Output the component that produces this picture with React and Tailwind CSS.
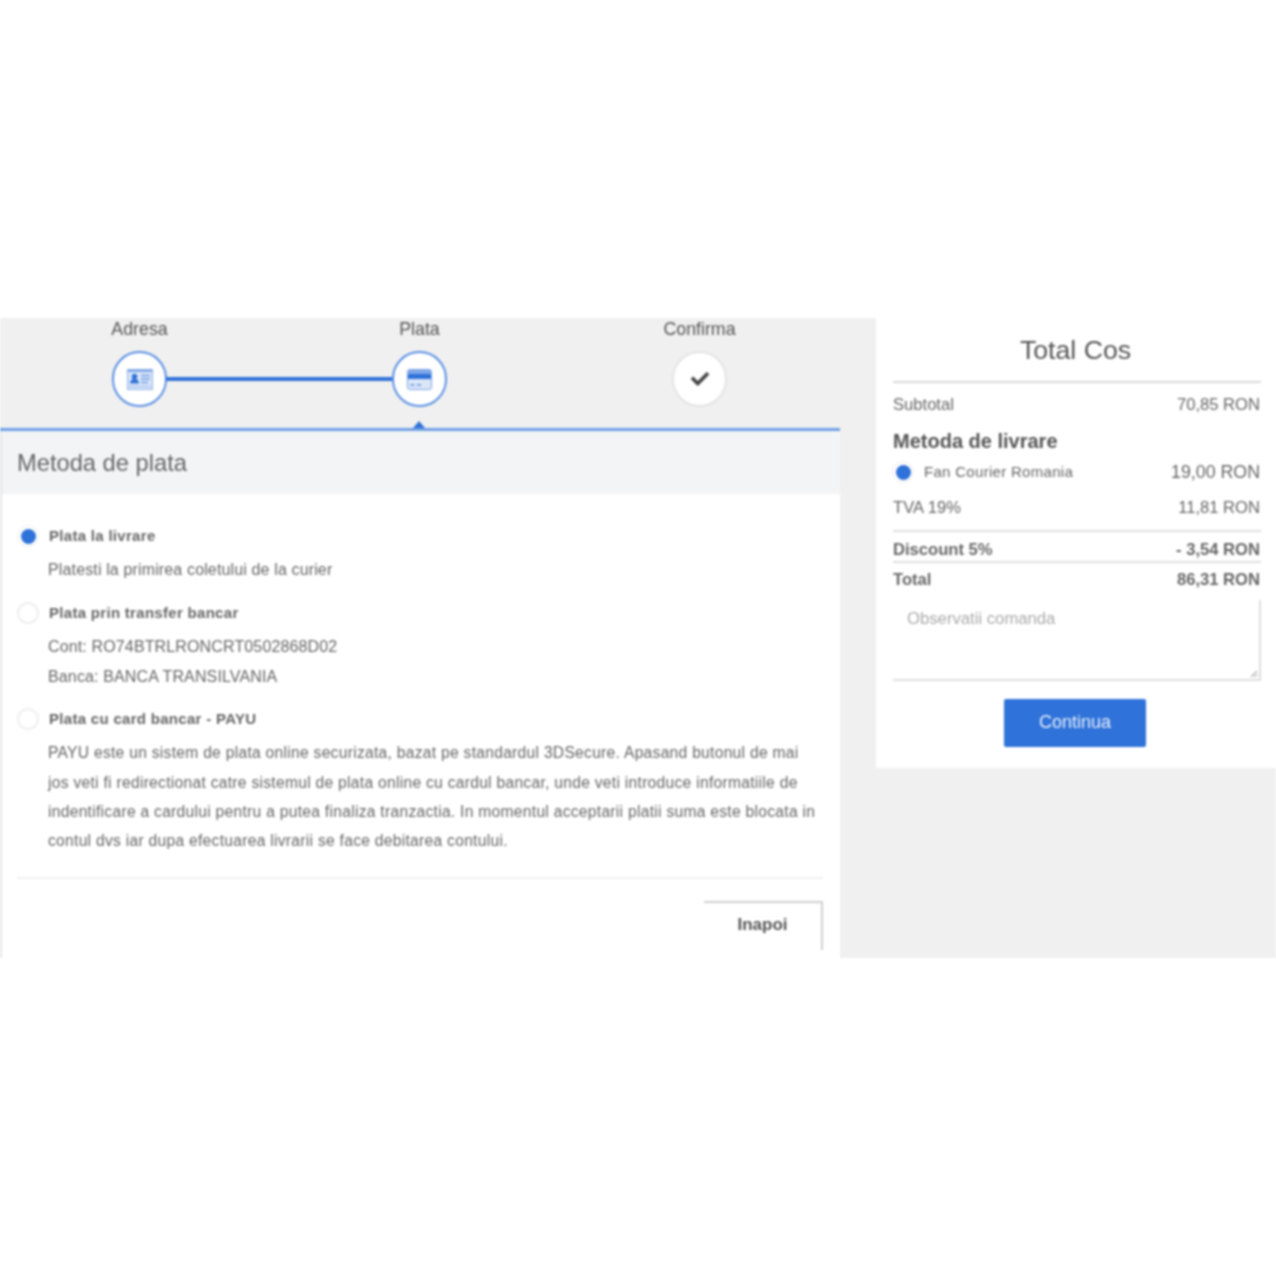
import React from "react";
import { FaCheck } from "react-icons/fa";

function IdIcon() {
  return (
    <svg width="26" height="21" viewBox="0 0 26 21">
      <rect x="0.5" y="0.5" width="25" height="20" fill="#dbe6f8" stroke="#8fb2ea" />
      <rect x="1" y="1" width="24" height="2" fill="#7fa7e8" />
      <circle cx="7.5" cy="7.5" r="2.8" fill="#2f72d9" />
      <path d="M3 14.5c0-3.2 2-4.7 4.5-4.7S12 11.300 12 14.500z" fill="#2f72d9" />
      <path d="M14 6.500h9M14 10h9M14 13.500h7" stroke="#6f9be2" strokeWidth="1.400" />
      <path d="M2 17.500h22" stroke="#9fbdee" strokeWidth="1.200" />
    </svg>
  );
}

function CardIcon() {
  return (
    <svg width="25" height="21" viewBox="0 0 25 21">
      <rect x="0.5" y="0.5" width="24" height="20" rx="2" fill="#dbe6f8" stroke="#7fa7e8" />
      <rect x="1" y="1" width="23" height="4" rx="1" fill="#7fa7e8" />
      <rect x="1" y="5" width="23" height="5" fill="#2f72d9" />
      <path d="M3.500 16h4M10 16h4" stroke="#5f90e0" strokeWidth="1.500" />
    </svg>
  );
}

function Step({ label, active, children, connector }) {
  return (
    <div className="relative flex flex-col items-center pr-[1px]">
      <div className="h-[33px] pt-[1px] text-[17.8px] leading-[20px] text-[#555]">{label}</div>
      {connector && (
        <div className="absolute left-[166px] top-[59px] h-[4px] w-[227px] bg-[#2f72d9]" />
      )}
      <div
        className={
          "flex h-[56px] w-[55px] items-center justify-center rounded-full bg-white " +
          (active ? "border-2 border-[#5b90e4]" : "border-2 border-[#e4e4e4]")
        }
      >
        {children}
      </div>
    </div>
  );
}

function Radio({ on }) {
  return on ? (
    <span className="flex h-[22px] w-[22px] shrink-0 items-center justify-center rounded-full border border-[#eeeeee] bg-white">
      <span className="h-[15px] w-[15px] rounded-full bg-[#2f72d9]" />
    </span>
  ) : (
    <span className="h-[22px] w-[22px] shrink-0 rounded-full border-2 border-[#efefef] bg-white" />
  );
}

function Option({ on, title, children }) {
  return (
    <div>
      <div className="flex h-[22px] items-center gap-[10px]">
        <Radio on={on} />
        <div className="text-[15px] font-bold tracking-[0.3px] text-[#666]">{title}</div>
      </div>
      <div className="pl-[31px] text-[16px] leading-[29.4px] tracking-[0.14px] text-[#666]">{children}</div>
    </div>
  );
}

function Row({ left, right, bold, className }) {
  return (
    <div
      className={
        "flex items-center justify-between pr-[1px] text-[16.6px] text-[#666] " +
        (bold ? "font-bold " : "") +
        (className || "")
      }
    >
      <span>{left}</span>
      <span>{right}</span>
    </div>
  );
}

export default function App() {
  return (
    <div className="min-h-[1276px] bg-white font-['Liberation_Sans',Arial,sans-serif] blur-[0.8px]">
      <div className="h-[318px]" />
      <div className="flex h-[640px] justify-between bg-[#f0f0f0]">
        <div className="flex w-[840px] flex-col">
          <div className="grid h-[110px] grid-cols-3">
            <Step label="Adresa" active connector>
              <IdIcon />
            </Step>
            <Step label="Plata" active>
              <CardIcon />
            </Step>
            <Step label="Confirma">
              <FaCheck className="text-[18px] text-[#444]" />
            </Step>
          </div>
          <div className="relative h-[3px] bg-[#6f9fe6]">
            <div className="absolute bottom-[3px] left-[413px] h-0 w-0 border-x-[6px] border-b-[7px] border-x-transparent border-b-[#2f72d9]" />
          </div>
          <div className="flex flex-1 flex-col border-l-2 border-[#e6e6e6] bg-white">
            <div className="flex h-[63px] items-center bg-[#f3f4f6] pl-[15px] pt-[2px] text-[23.700px] text-[#666]">
              Metoda de plata
            </div>
            <div className="flex flex-col pl-[15px] pr-[17px] pt-[31px]">
              <Option on title="Plata la livrare">
                <div className="pt-[8px] pb-[18px]">Platesti la primirea coletului de la curier</div>
              </Option>
              <Option title="Plata prin transfer bancar">
                <div className="pt-[8px] pb-[17px]">
                  <div>Cont: RO74BTRLRONCRT0502868D02</div>
                  <div>Banca: BANCA TRANSILVANIA</div>
                </div>
              </Option>
              <Option title="Plata cu card bancar - PAYU">
                <div className="whitespace-nowrap pt-[8px] text-[15.600px] tracking-[0.29px]">
                  <div>PAYU este un sistem de plata online securizata, bazat pe standardul 3DSecure. Apasand butonul de mai</div>
                  <div>jos veti fi redirectionat catre sistemul de plata online cu cardul bancar, unde veti introduce informatiile de</div>
                  <div>indentificare a cardului pentru a putea finaliza tranzactia. In momentul acceptarii platii suma este blocata in</div>
                  <div>contul dvs iar dupa efectuarea livrarii se face debitarea contului.</div>
                </div>
              </Option>
              <div className="mt-[21px] h-[2px] bg-[#f0f0f0]" />
              <div className="mt-[22px] flex justify-end">
                <div className="flex h-[49px] w-[119px] items-center justify-center border-t-2 border-r-2 border-[#cfcfcf] pb-[3px] text-[17px] font-bold text-[#555]">
                  Inapoi
                </div>
              </div>
            </div>
          </div>
        </div>

        <div className="flex h-[450px] w-[400px] flex-col bg-white pl-[17px] pr-[15px]">
          <div className="flex h-[63px] items-center justify-center pr-[3px] pt-[2px] text-[26.700px] text-[#555]">Total Cos</div>
          <div className="h-[2px] bg-[#d9d9d9]" />
          <Row left="Subtotal" right="70,85 RON" className="mt-[11px] h-[22px]" />
          <div className="mt-[13px] h-[24px] text-[20px] leading-[24px] font-bold text-[#555]">Metoda de livrare</div>
          <div className="mt-[8px] flex h-[22px] items-center justify-between pr-[1px] text-[17.800px] text-[#666]">
            <div className="-ml-[1px] flex items-center gap-[10px]">
              <Radio on />
              <span className="text-[15px] tracking-[0.3px]">Fan Courier Romania</span>
            </div>
            <span>19,00 RON</span>
          </div>
          <Row left="TVA 19%" right="11,81 RON" className="mt-[14px] h-[22px]" />
          <div className="mt-[11px] h-[2px] bg-[#dedede]" />
          <Row left="Discount 5%" right="- 3,54 RON" bold className="mt-[7px] h-[22px]" />
          <div className="h-[2px] bg-[#dedede]" />
          <Row left="Total" right="86,31 RON" bold className="mt-[6px] h-[22px]" />
          <div className="relative mt-[9px] h-[81px] border-r-2 border-b-2 border-[#dddddd] pl-[14px] pt-[6px] text-[16.700px] text-[#aaa]">
            Observatii comanda
            <svg className="absolute bottom-[1px] right-[1px]" width="8" height="8" viewBox="0 0 8 8">
              <path d="M7 1L1 7M7 4.500L4.500 7" stroke="#777" strokeWidth="1" />
            </svg>
          </div>
          <div className="mt-[18px] flex justify-center pr-[4px]">
            <div className="flex h-[48px] w-[142px] items-center justify-center rounded-[2px] bg-[#2f72d9] pb-[1px] text-[18px] text-[#e8f0fc]">
              Continua
            </div>
          </div>
        </div>
      </div>
    </div>
  );
}
